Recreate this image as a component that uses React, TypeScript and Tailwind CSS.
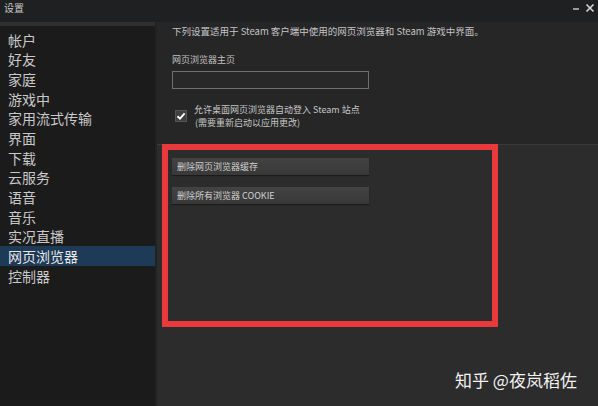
import React from "react";

const font = { fontFamily: '"Noto Sans CJK SC", "Noto Sans", sans-serif' };

const navItems = [
  "帐户",
  "好友",
  "家庭",
  "游戏中",
  "家用流式传输",
  "界面",
  "下载",
  "云服务",
  "语音",
  "音乐",
  "实况直播",
  "网页浏览器",
  "控制器",
];

function Sidebar() {
  return (
    <div className="w-[155px] shrink-0 bg-[#1b1b1c] flex flex-col">
      <div className="h-[4px] bg-[#2f2f30]" />
      <div className="pt-[4px] flex flex-col">
        {navItems.map((item) => (
          <div
            key={item}
            className={
              "h-[19.67px] flex items-center pl-[8px] text-[14px] leading-none " +
              (item === "网页浏览器"
                ? "bg-[#1d3a57] text-[#e6e6e6]"
                : "text-[#c9c9c9]")
            }
          >
            {item}
          </div>
        ))}
      </div>
    </div>
  );
}

function ActionButton({ label }: { label: string }) {
  return (
    <div className="w-[197px] h-[17px] flex items-center pl-[5px] bg-gradient-to-b from-[#434343] to-[#383838] text-[9px] text-[#d0d0d0] leading-none shadow-[0_1px_1px_rgba(0,0,0,0.4)]">
      {label}
    </div>
  );
}

function Content() {
  return (
    <div className="flex-1 flex flex-col border-l-2 border-[#222223]">
      <div className="h-[122px] bg-[#262627] pl-[15px] pt-[3px] flex flex-col">
        <div className="text-[9.5px] leading-[12px] text-[#c4c4c4]">
          下列设置适用于 Steam 客户端中使用的网页浏览器和 Steam 游戏中界面。
        </div>
        <div className="mt-[17px] text-[9px] leading-[12px] text-[#c0c0c0]">
          网页浏览器主页
        </div>
        <div className="mt-[5px] w-[197px] h-[18px] border border-[#6e6e6e] bg-[#282828]" />
        <div className="mt-[14px] flex items-start gap-[7px] pl-[3px]">
          <div className="mt-[7px] w-[12px] h-[12px] bg-[#3f3f40] border border-[#555] flex items-center justify-center">
            <svg width="10" height="10" viewBox="0 0 10 10">
              <path
                d="M1.5 5.2 L4 7.6 L8.6 2.4"
                fill="none"
                stroke="#ffffff"
                strokeWidth="1.9"
              />
            </svg>
          </div>
          <div className="flex flex-col text-[9px] leading-[13px] text-[#c6c6c6]">
            <span>允许桌面网页浏览器自动登入 Steam 站点</span>
            <span className="pl-[1px]">(需要重新启动以应用更改)</span>
          </div>
        </div>
      </div>
      <div className="flex-1 border-t border-[#3b3b3c] bg-[#2c2c2d] pl-[15px] pt-[13px] flex flex-col gap-[12px]">
        <ActionButton label="删除网页浏览器缓存" />
        <ActionButton label="删除所有浏览器 COOKIE" />
      </div>
    </div>
  );
}

export default function App() {
  return (
    <div
      className="relative w-[598px] h-[406px] overflow-hidden bg-[#262627] flex flex-col"
      style={font}
    >
      <div className="h-[22px] shrink-0 bg-[#1f2022] flex items-start justify-between">
        <span className="pl-[4px] pt-[2px] text-[10px] leading-[12px] text-[#c8c8c8]">
          设置
        </span>
        <div className="flex items-center gap-[5px] pr-[3px] pt-[3px] text-[#cfcfcf]">
          <svg width="8" height="10" viewBox="0 0 8 10">
            <path d="M1 6 H7" stroke="#cfcfcf" strokeWidth="1.4" />
          </svg>
          <svg width="10" height="10" viewBox="0 0 10 10">
            <path d="M1.5 1.5 L8.5 8.5 M8.5 1.5 L1.5 8.5" stroke="#d8d8d8" strokeWidth="1.6" />
          </svg>
        </div>
      </div>
      <div className="flex-1 flex">
        <Sidebar />
        <Content />
      </div>

      {/* highlight frame around the cache actions */}
      <div className="absolute left-[162px] top-[144px] w-[336px] h-[183px] border-[6px] border-[#e8393c]" />

      <div className="absolute left-[455px] top-[369px] text-[17px] leading-[22px] text-[#f2f2f2]">
        知乎 @夜岚稻佐
      </div>
    </div>
  );
}
